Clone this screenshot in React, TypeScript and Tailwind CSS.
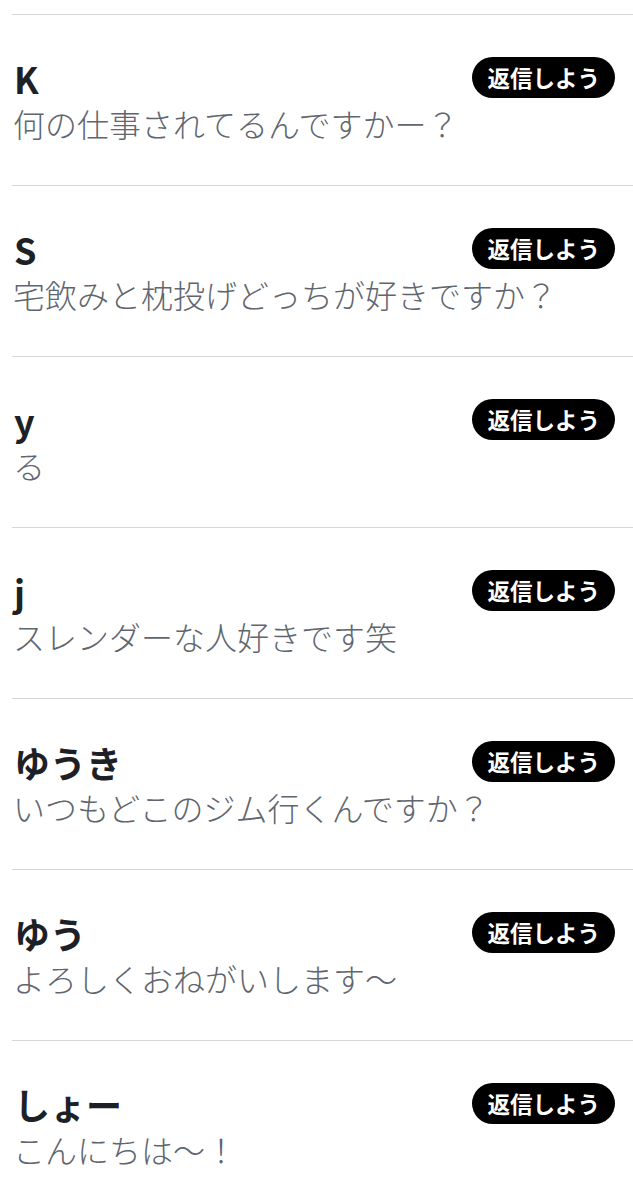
import React from "react";

const items = [
  { name: "K", msg: "何の仕事されてるんですかー？" },
  { name: "S", msg: "宅飲みと枕投げどっちが好きですか？" },
  { name: "y", msg: "る" },
  { name: "j", msg: "スレンダーな人好きです笑" },
  { name: "ゆうき", msg: "いつもどこのジム行くんですか？" },
  { name: "ゆう", msg: "よろしくおねがいします〜" },
  { name: "しょー", msg: "こんにちは〜！" },
];

export default function App() {
  return (
    <div
      className="w-[633px] h-[1199px] overflow-hidden bg-white pt-[14px] pl-[12px]"
      style={{ fontFamily: '"Noto Sans CJK JP", "Noto Sans", sans-serif' }}
    >
      {items.map((it, i) => (
        <div key={i} className="border-t border-[#d6d8dc] pt-[42px] pb-[38px] pr-[18px]">
          <div className="flex items-center justify-between h-[41px]">
            <div className="pl-[2px] text-[36px] font-bold text-[#1d2125] leading-none">{it.name}</div>
            <div className="h-[41px] rounded-full bg-black text-white text-[22.5px] font-bold px-[15px] flex items-center leading-none">
              返信しよう
            </div>
          </div>
          <div className="mt-[2px] pl-[1px] text-[32px] font-light leading-[47px] text-[#5f666f]">{it.msg}</div>
        </div>
      ))}
    </div>
  );
}
